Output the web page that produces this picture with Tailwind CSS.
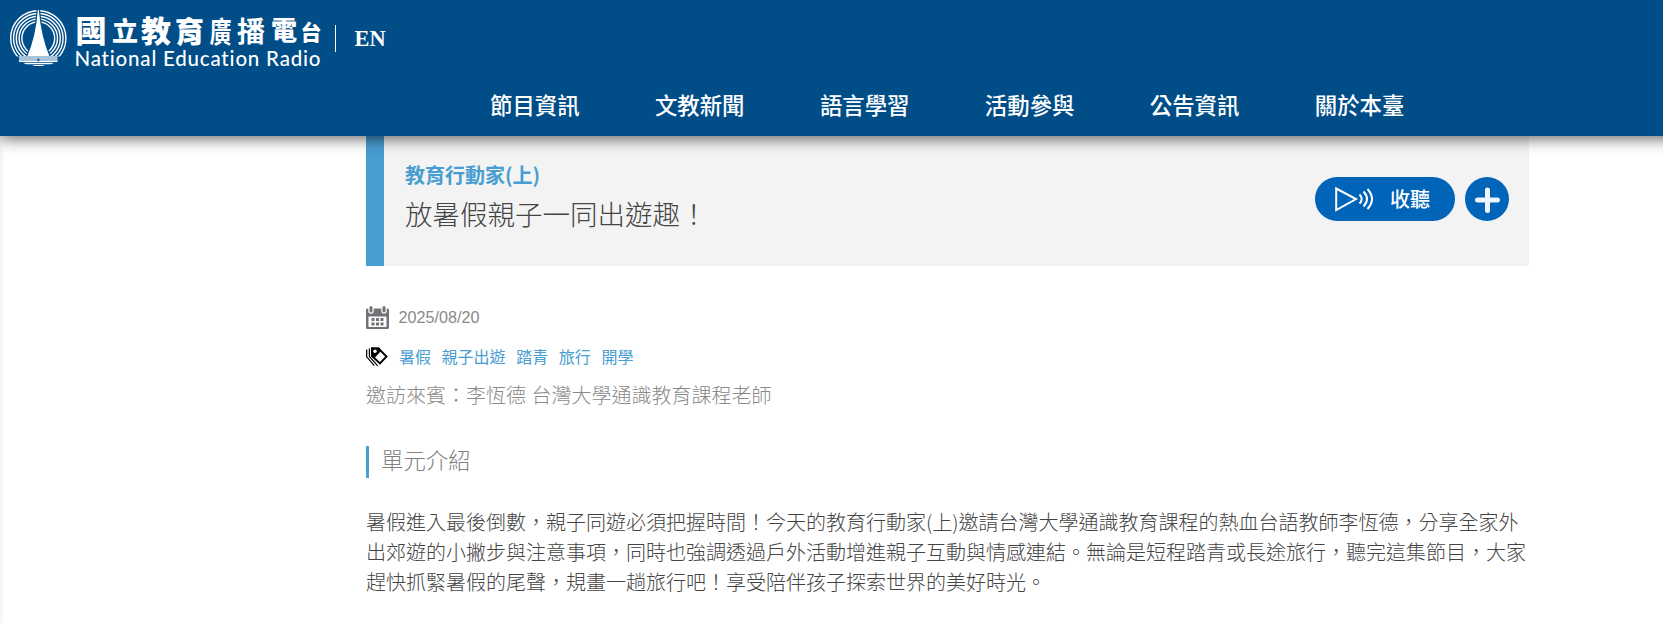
<!DOCTYPE html>
<html lang="zh-Hant">
<head>
  <meta charset="UTF-8" />
  <title>國立教育廣播電台</title>
  <meta name="viewport" content="width=device-width, initial-scale=1.0"/>
  <script src="https://cdn.jsdelivr.net/npm/@tailwindcss/browser@4"></script>
</head>
<body class="bg-white h-[623px] overflow-hidden font-['Liberation_Sans','Noto_Sans_CJK_TC',sans-serif] shadow-[inset_6px_0_6px_-5px_rgba(0,0,0,0.08)]">
  <!-- header -->
  <header class="relative z-10 h-[136px] w-[1680px] bg-[#004d88] text-white shadow-[0_2px_15px_rgba(0,0,0,0.65)]">
    <div class="flex h-[76px] pl-2">
      <a href="#" aria-label="國立教育廣播電台">
        <svg class="block" width="320" height="76" viewBox="8 0 320 76">
          <clipPath id="waves"><path d="M8 0h60v56.500H8z" /></clipPath>
          <g fill="none" stroke="#fff" stroke-width="1.400" clip-path="url(#waves)">
            <circle cx="38.300" cy="38.300" r="27.600" />
            <circle cx="38.300" cy="38.300" r="24.800" />
            <circle cx="38.300" cy="38.300" r="22" />
            <circle cx="38.300" cy="38.300" r="19.200" />
            <circle cx="38.300" cy="38.300" r="16.400" />
          </g>
          <path d="M37.800 10h1Q41 36 49.500 56.500H27.200Q36 36 37.800 10z" fill="#fff" stroke="#004d88" stroke-width="2.500" paint-order="stroke" />
          <path d="M19 56h38.500v4.500H19z" fill="#a9c2d8" />
          <path d="M19 60.500h17.500l2 1 2-1h17v1.500h-38.500z" fill="#fff" />
          <path d="M23 62.700h31l-3 1.500H26z" fill="#fff" />
          <path d="M32 65h13l-3 1H35z" fill="#fff" />
          <circle cx="38.300" cy="59.500" r="1" fill="#004d88" />
          <g fill="#fff" font-weight="900" class="font-['Noto_Sans_CJK_TC',sans-serif]">
            <text x="75.500" y="42" font-size="31">國</text>
            <text x="112" y="41" font-size="26">立</text>
            <text x="141" y="42" font-size="30">教</text>
            <text x="175" y="42.500" font-size="29">育</text>
            <text transform="translate(209.500 42.500) scale(.76 1)" font-size="29" font-weight="700">廣</text>
            <text x="237" y="42" font-size="28" font-weight="700">播</text>
            <text x="271" y="40" font-size="26">電</text>
            <text x="300.500" y="39.500" font-size="21">台</text>
          </g>
          <text x="74.500" y="65.700" font-size="20.500" font-weight="500" textLength="246" fill="#fff" class="font-[Lato,sans-serif] [font-variant-ligatures:none]">National Education Radio</text>
        </svg>
      </a>
      <span class="mt-[25px] ml-[7px] h-[27px] w-px bg-white"></span>
      <a href="#" class="mt-[26px] ml-[18.500px] font-['Liberation_Serif',serif] text-[22.4px] leading-[26px] font-bold">EN</a>
    </div>
    <nav class="flex gap-[75.400px] pl-[490px] pt-[12px] font-['Noto_Sans_CJK_TC',sans-serif] text-[22.400px] leading-[32px] font-medium whitespace-nowrap">
      <a href="#">節目資訊</a>
      <a href="#">文教新聞</a>
      <a href="#">語言學習</a>
      <a href="#">活動參與</a>
      <a href="#">公告資訊</a>
      <a href="#">關於本臺</a>
    </nav>
  </header>

  <main class="ml-[366px] w-[1163px]">
    <!-- episode title -->
    <section class="flex h-[130px] justify-between border-l-[18px] border-[#489dd1] bg-[#f3f3f3] pr-5 pl-[21px] font-['Noto_Sans_CJK_TC',sans-serif]">
      <div class="pt-[24px]">
        <h2 class="text-[20px] leading-[30px] font-bold text-[#489dd1]">教育行動家(上)</h2>
        <h1 class="mt-[3px] text-[27.500px] leading-[40px] font-light text-[#444]">放暑假親子一同出遊趣！</h1>
      </div>
      <div class="flex gap-2.5 pt-[41px]">
        <button class="flex h-[44px] w-[140px] items-center rounded-full bg-[#0064b9] pl-5 text-[20px] font-medium text-white">
          <svg width="40" height="26" viewBox="0 0 40 26" fill="none" stroke="#fff" stroke-width="2">
            <path d="M1.200 2.500v21.500L21 13z" />
            <path d="M24.500 8.500q4.500 4.500 0 9M28.500 5.500q7 7.500 0 15M32.500 3q9 10 0 20" />
          </svg>
          <span class="ml-[15px]">收聽</span>
        </button>
        <button class="h-[44px] w-[44px] rounded-full bg-[#0064b9]" aria-label="加入">
          <svg width="44" height="44" viewBox="0 0 44 44" fill="none" stroke="#f1f5fa" stroke-width="5" stroke-linecap="round">
            <path d="M22.500 13v20.500M12.500 23h20" />
          </svg>
        </button>
      </div>
    </section>

    <!-- date and tags -->
    <div class="mt-[39px] flex h-6 items-center gap-[9.500px]">
      <svg width="23" height="24" viewBox="0 0 23 24">
        <path d="M0 5q0-1.500 1.500-1.500h20q1.500 0 1.500 1.500V22.500q0 1.500-1.500 1.500h-20Q0 24 0 22.500z" fill="#717275" />
        <path d="M2.500 11.500h18v10.500h-18z" fill="#fff" />
        <path d="M5 2v4M18 2v4" stroke="#fff" stroke-width="5.500" stroke-linecap="round" />
        <path d="M5 2.500v3.500M18 2.500v3.500" stroke="#717275" stroke-width="3" stroke-linecap="round" />
        <path d="M5.500 13h3v3h-3zM10 13h3v3h-3zM14.500 13h3v3h-3zM5.500 17.500h3v3h-3zM10 17.500h3v3h-3zM14.500 17.500h3v3h-3z" fill="#717275" />
      </svg>
      <time class="pt-px text-[16.200px] text-[#8a8a8a]">2025/08/20</time>
    </div>
    <div class="mt-[15px] flex h-6 items-center text-[16px] text-[#489dd1]">
      <svg class="mt-0.5 mr-[11px]" width="22" height="20" viewBox="0 0 22 20">
        <path d="M6 1.500h6.500l8 8-6.500 7L6 9z" fill="#fff" stroke="#000" stroke-width="1.900" />
        <path d="M5 .500h8l2.500 3L8.500 11 5 8.500z" />
        <circle cx="9" cy="4.200" r="1.700" fill="#fff" />
        <path d="M3.400 1.500V9.500l8.300 9.300M.7 2.500v7.300l7.600 8.900" fill="none" stroke="#000" stroke-width="1.200" />
      </svg>
      <div class="flex gap-[10.600px] font-['Noto_Sans_CJK_TC',sans-serif] font-normal">
        <a href="#">暑假</a>
        <a href="#">親子出遊</a>
        <a href="#">踏青</a>
        <a href="#">旅行</a>
        <a href="#">開學</a>
      </div>
    </div>
    <p class="mt-[13px] text-[20px] leading-[30px] font-light text-[#8a8a8a]">邀訪來賓：李恆德 台灣大學通識教育課程老師</p>

    <!-- introduction -->
    <h3 class="mt-[35px] h-8 border-l-3 border-[#489dd1] pl-3 font-['Noto_Sans_CJK_TC',sans-serif] text-[22.400px] leading-[26px] font-light text-[#808080]">單元介紹</h3>
    <p class="mt-[29px] font-['Noto_Sans_CJK_TC',sans-serif] text-[20px] leading-[30px] font-light text-[#444] whitespace-nowrap">暑假進入最後倒數，親子同遊必須把握時間！今天的教育行動家(上)邀請台灣大學通識教育課程的熱血台語教師李恆德，分享全家外<br />出郊遊的小撇步與注意事項，同時也強調透過戶外活動增進親子互動與情感連結。無論是短程踏青或長途旅行，聽完這集節目，大家<br />趕快抓緊暑假的尾聲，規畫一趟旅行吧！享受陪伴孩子探索世界的美好時光。</p>
  </main>
</body>
</html>
